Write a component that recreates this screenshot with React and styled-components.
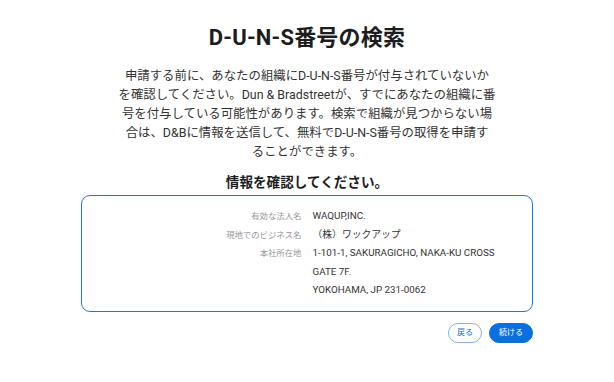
import React from 'react'
import styled, { createGlobalStyle } from 'styled-components'

const GlobalStyle = createGlobalStyle`
  html, body {
    margin: 0;
    padding: 0;
    background: #ffffff;
  }
  body {
    font-family: Roboto, "Noto Sans CJK JP", sans-serif;
    color: #1d1d1f;
    -webkit-font-smoothing: antialiased;
  }
`

const Page = styled.div`
  width: 614px;
  padding-top: 24px;
  display: flex;
  flex-direction: column;
  align-items: center;
`

const Title = styled.h1`
  margin: 0;
  font-size: 22px;
  line-height: 28px;
  font-weight: 700;
  letter-spacing: 0.2px;
  color: #1d1d1f;
`

const Intro = styled.p`
  margin: 14px 0 0;
  font-size: 12.4px;
  line-height: 19px;
  text-align: center;
  color: #333333;
`

const Subtitle = styled.h2`
  margin: 12px 0 0;
  font-size: 13.6px;
  line-height: 18px;
  font-weight: 700;
  color: #1d1d1f;
`

const Card = styled.div`
  box-sizing: border-box;
  width: 452px;
  height: 117px;
  margin-top: 4px;
  padding: 11px 0 0;
  border: 1px solid #1d78e4;
  border-radius: 9px;
  display: grid;
  grid-template-columns: 1fr 1fr;
  column-gap: 11px;
  align-content: start;
`

const Label = styled.div`
  text-align: right;
  font-size: 8.4px;
  line-height: 18.5px;
  color: #96969a;
`

const Value = styled.div`
  font-size: 9.8px;
  line-height: 18.5px;
  color: #333333;
  max-width: 190px;
`

const Actions = styled.div`
  width: 452px;
  margin-top: 11px;
  display: flex;
  justify-content: flex-end;
  gap: 7px;
`

const Button = styled.button`
  box-sizing: border-box;
  height: 20px;
  padding: 0 ${p => (p.$primary ? '9px' : '8px')};
  border-radius: 10px;
  font-family: inherit;
  font-size: 8px;
  line-height: 18px;
  cursor: pointer;
  border: 1px solid ${p => (p.$primary ? '#0a6fdf' : '#7fb3ee')};
  background: ${p => (p.$primary ? '#0a6fdf' : '#ffffff')};
  color: ${p => (p.$primary ? '#ffffff' : '#0a6fdf')};
`

const rows = [
  { label: '有効な法人名', value: 'WAQUP,INC.' },
  { label: '現地でのビジネス名', value: '（株）ワックアップ' },
  {
    label: '本社所在地',
    value: (
      <>
        1-101-1, SAKURAGICHO, NAKA-KU CROSS GATE 7F.
        <br />
        YOKOHAMA, JP 231-0062
      </>
    ),
  },
]

export default function App() {
  return (
    <>
      <GlobalStyle />
      <Page>
        <Title>D-U-N-S番号の検索</Title>
        <Intro>
          申請する前に、あなたの組織にD-U-N-S番号が付与されていないか
          <br />
          を確認してください。Dun &amp; Bradstreetが、すでにあなたの組織に番
          <br />
          号を付与している可能性があります。検索で組織が見つからない場
          <br />
          合は、D&amp;Bに情報を送信して、無料でD-U-N-S番号の取得を申請す
          <br />
          ることができます。
        </Intro>
        <Subtitle>情報を確認してください。</Subtitle>
        <Card>
          {rows.map(r => (
            <React.Fragment key={r.label}>
              <Label>{r.label}</Label>
              <Value>{r.value}</Value>
            </React.Fragment>
          ))}
        </Card>
        <Actions>
          <Button>戻る</Button>
          <Button $primary>続ける</Button>
        </Actions>
      </Page>
    </>
  )
}
